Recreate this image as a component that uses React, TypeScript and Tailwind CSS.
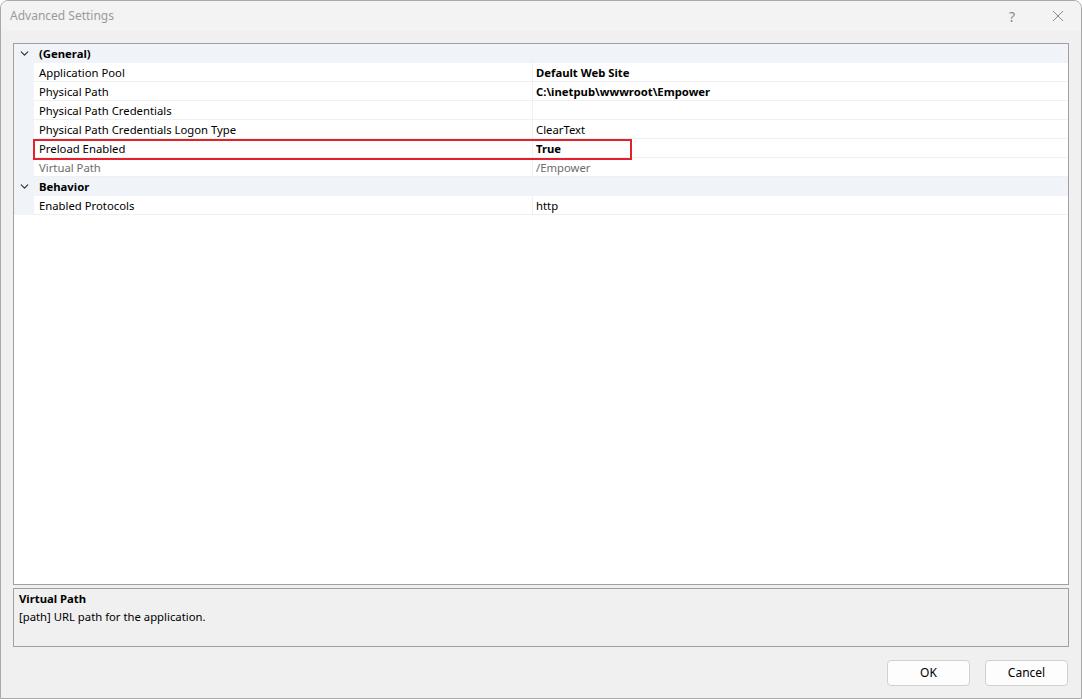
import { ChevronDown } from 'lucide-react';

interface Row {
  name: string;
  value?: string;
  bold?: boolean;
  muted?: boolean;
}

interface Category {
  title: string;
  rows: Row[];
}

const categories: Category[] = [
  {
    title: '(General)',
    rows: [
      { name: 'Application Pool', value: 'Default Web Site', bold: true },
      { name: 'Physical Path', value: 'C:\\inetpub\\wwwroot\\Empower', bold: true },
      { name: 'Physical Path Credentials', value: '' },
      { name: 'Physical Path Credentials Logon Type', value: 'ClearText' },
      { name: 'Preload Enabled', value: 'True', bold: true },
      { name: 'Virtual Path', value: '/Empower', muted: true },
    ],
  },
  {
    title: 'Behavior',
    rows: [{ name: 'Enabled Protocols', value: 'http' }],
  },
];

const font = { fontFamily: '"Segoe UI", "Noto Sans", sans-serif' };

function CategoryRow({ title }: { title: string }) {
  return (
    <div className="flex h-[19px] items-center bg-[#f0f4f9]">
      <div className="flex w-[20px] justify-center pl-[1px]">
        <ChevronDown className="h-[13px] w-[13px] text-[#333]" strokeWidth={2.2} />
      </div>
      <span className="pl-[5px] pt-[2px] font-bold text-black">{title}</span>
    </div>
  );
}

function PropertyRow({ row }: { row: Row }) {
  return (
    <div className="flex h-[19px]">
      <div className="w-[20px] bg-[#f0f4f9]" />
      <div
        className={`flex w-[499px] items-center border-r border-b border-[#f0f0f0] bg-white pl-[5px] pt-[2px] ${
          row.muted ? 'text-[#6d6d6d]' : 'text-black'
        }`}
      >
        {row.name}
      </div>
      <div
        className={`flex flex-1 items-center border-b border-[#f0f0f0] bg-white pl-[3px] pt-[2px] ${
          row.bold ? 'font-bold' : ''
        } ${row.muted ? 'text-[#6d6d6d]' : 'text-black'}`}
      >
        {row.value}
      </div>
    </div>
  );
}

export default function App() {
  return (
    <div
      className="flex h-[699px] w-[1082px] flex-col overflow-hidden rounded-tl-[8px] rounded-tr-[8px] border border-[#a9a9a9] bg-[#f0f0f0] text-[11.3px]"
      style={font}
    >
      <div className="flex h-[30px] shrink-0 items-center bg-[#f3f3f3] pl-[9px]">
        <span className="text-[12px] text-[#9a9a9a]">Advanced Settings</span>
        <div className="ml-auto flex items-center">
          <span className="w-[46px] text-center text-[14px] text-[#8a8a8a]">?</span>
          <div className="flex w-[46px] justify-center">
            <svg width="12" height="12" viewBox="0 0 12 12" className="text-[#8a8a8a]">
              <path d="M1 1 L11 11 M11 1 L1 11" stroke="currentColor" strokeWidth="1" />
            </svg>
          </div>
        </div>
      </div>

      <div className="flex flex-1 flex-col px-[12px] pt-[12px]">
        <div className="relative h-[542px] border border-[#a0a0a0] bg-white">
          {categories.map(cat => (
            <div key={cat.title}>
              <CategoryRow title={cat.title} />
              {cat.rows.map(row => (
                <PropertyRow key={row.name} row={row} />
              ))}
            </div>
          ))}
          <div className="absolute left-[19px] top-[95px] h-[21px] w-[599px] border-2 border-[#e3212d]" />
        </div>

        <div className="mt-[3px] h-[59px] border border-[#a0a0a0] bg-[#f0f0f0] px-[5px] pt-[1px]">
          <div className="font-bold text-black leading-[18px]">Virtual Path</div>
          <div className="text-black leading-[18px]">[path] URL path for the application.</div>
        </div>

        <div className="mt-[13px] flex justify-end gap-[15px] pr-[1px]">
          <button className="h-[26px] w-[83px] rounded-[4px] border border-[#d0d0d0] bg-[#fdfdfd] text-[12px] text-black">
            OK
          </button>
          <button className="h-[26px] w-[83px] rounded-[4px] border border-[#d0d0d0] bg-[#fdfdfd] text-[12px] text-black">
            Cancel
          </button>
        </div>
      </div>
    </div>
  );
}
